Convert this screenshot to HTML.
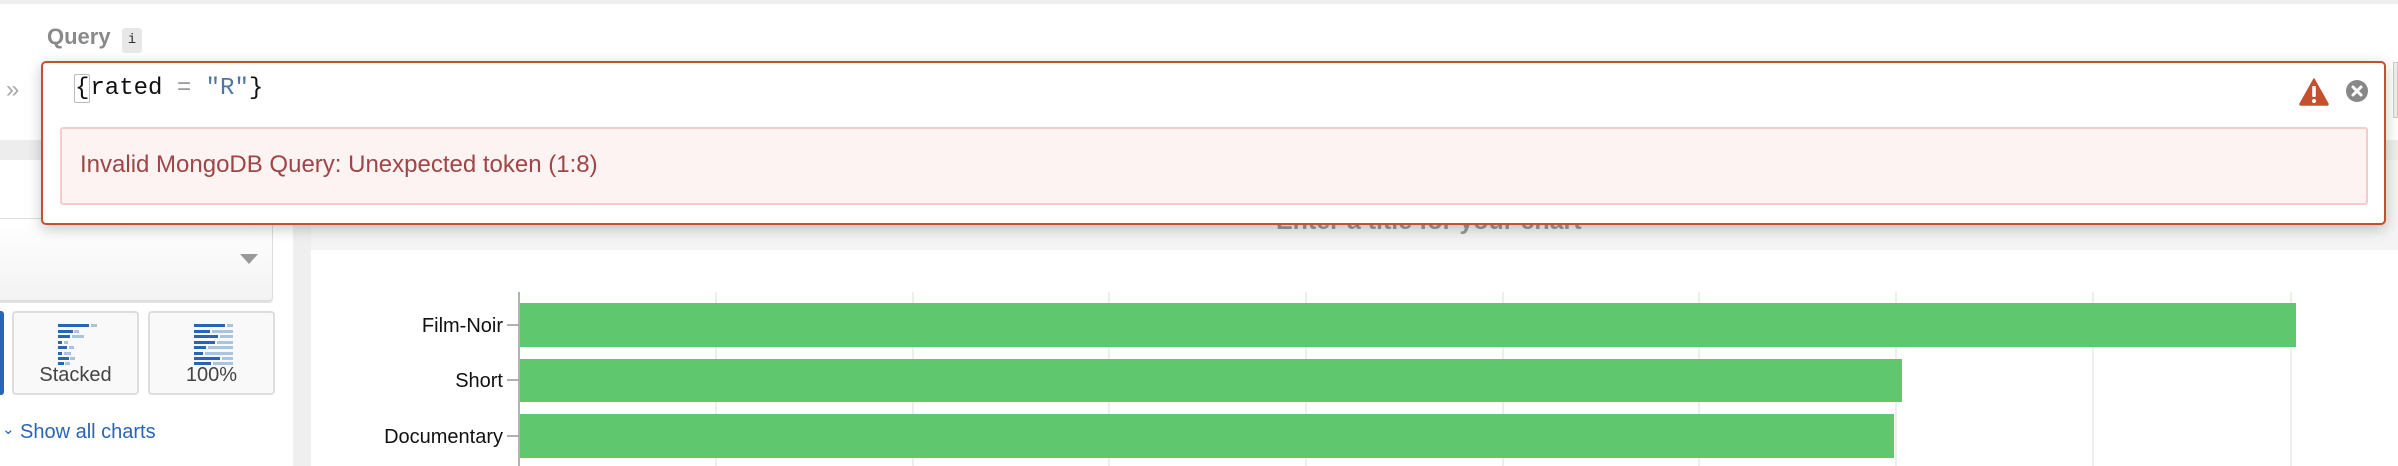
<!DOCTYPE html>
<html><head><meta charset="utf-8"><style>
*{margin:0;padding:0;box-sizing:border-box}
body{width:2398px;height:466px;overflow:hidden;background:#fff;font-family:"Liberation Sans",sans-serif;position:relative}
.abs{position:absolute}
</style></head><body>
<div class="abs" style="left:0;top:0;width:2398px;height:4px;background:#eeeeee"></div>
<div class="abs" style="left:47px;top:24px;font-size:22px;font-weight:bold;color:#8a8a8a">Query</div>
<div class="abs" style="left:122px;top:28px;width:20px;height:25px;background:#e8e8e8;border-radius:3px;font-family:'Liberation Mono',monospace;font-size:14px;color:#333;text-align:center;line-height:25px">i</div>
<div class="abs" style="left:6px;top:76px;font-size:24px;color:#aaa">»</div>
<div class="abs" style="left:2393px;top:62px;width:5px;height:56px;background:#eee;border:1px solid #ccc"></div>
<div class="abs" style="left:0;top:140px;width:2398px;height:20px;background:#ededed"></div>
<div class="abs" style="left:0;top:160px;width:293px;height:306px;background:#fff"></div>
<div class="abs" style="left:293px;top:140px;width:18px;height:326px;background:#efefef"></div>
<div class="abs" style="left:311px;top:160px;width:2087px;height:306px;background:#f4f4f4"></div>
<div class="abs" style="left:311px;top:250px;width:2087px;height:216px;background:#fff"></div>
<div class="abs" style="left:0;top:218px;width:273px;height:83px;background:linear-gradient(#fff,#f3f3f3);border:1px solid #ddd;border-left:none;border-radius:0 4px 4px 0;box-shadow:0 2px 0 #e2e2e2"></div>
<div class="abs" style="left:240px;top:254px;width:0;height:0;border-left:9px solid transparent;border-right:9px solid transparent;border-top:10px solid #999"></div>
<div class="abs" style="left:0;top:311px;width:4px;height:84px;background:#2a64b8;border-radius:0 3px 3px 0"></div>
<div class="abs" style="left:12px;top:311px;width:127px;height:84px;border:2px solid #ddd;border-radius:4px;background:#f9f9f9"></div>
<div class="abs" style="left:148px;top:311px;width:127px;height:84px;border:2px solid #ddd;border-radius:4px;background:#f9f9f9"></div>
<svg class="abs" style="left:58px;top:324px" width="42" height="42">
<g fill="#2a64b8"><rect x="0" y="0" width="31" height="3"/><rect x="0" y="6" width="15" height="3"/><rect x="0" y="11" width="12" height="3"/><rect x="0" y="17" width="4" height="3"/><rect x="0" y="22" width="9" height="3"/><rect x="0" y="28" width="4" height="3"/><rect x="0" y="33" width="11" height="3"/><rect x="0" y="38" width="6" height="3"/></g>
<g fill="#a9c4e0"><rect x="33" y="0" width="6" height="3"/><rect x="16" y="6" width="5" height="3"/><rect x="14" y="11" width="12" height="3"/><rect x="6" y="17" width="4" height="3"/><rect x="11" y="22" width="5" height="3"/><rect x="6" y="28" width="7" height="3"/><rect x="12" y="33" width="5" height="3"/><rect x="7" y="38" width="5" height="3"/></g></svg>
<svg class="abs" style="left:194px;top:324px" width="42" height="42">
<g fill="#2a64b8"><rect x="0" y="0" width="31" height="3"/><rect x="0" y="6" width="16" height="3"/><rect x="0" y="11" width="24" height="3"/><rect x="0" y="17" width="21" height="3"/><rect x="0" y="22" width="12" height="3"/><rect x="0" y="28" width="9" height="3"/><rect x="0" y="33" width="26" height="3"/><rect x="0" y="38" width="17" height="3"/></g>
<g fill="#a9c4e0"><rect x="33" y="0" width="6" height="3"/><rect x="18" y="6" width="21" height="3"/><rect x="26" y="11" width="13" height="3"/><rect x="23" y="17" width="16" height="3"/><rect x="14" y="22" width="25" height="3"/><rect x="11" y="28" width="28" height="3"/><rect x="28" y="33" width="11" height="3"/><rect x="19" y="38" width="20" height="3"/></g></svg>
<div class="abs" style="left:12px;top:364px;width:127px;text-align:center;font-size:20px;color:#444">Stacked</div>
<div class="abs" style="left:148px;top:364px;width:127px;text-align:center;font-size:20px;color:#444">100%</div>
<div class="abs" style="left:2px;top:420px;font-size:15px;color:#2a64b8">&#8964;</div>
<div class="abs" style="left:20px;top:421px;font-size:20px;color:#2a64b8">Show all charts</div>
<div class="abs" style="left:1276px;top:207px;font-size:25px;font-weight:bold;color:#9a9a9a;white-space:nowrap">Enter a title for your chart</div>
<svg class="abs" style="left:0;top:0" width="2398" height="466">
<g stroke="#e4e4e4" stroke-width="1.3">
<line x1="716" y1="292" x2="716" y2="466"/><line x1="913" y1="292" x2="913" y2="466"/><line x1="1109" y1="292" x2="1109" y2="466"/><line x1="1306" y1="292" x2="1306" y2="466"/><line x1="1503" y1="292" x2="1503" y2="466"/><line x1="1699" y1="292" x2="1699" y2="466"/><line x1="1896" y1="292" x2="1896" y2="466"/><line x1="2093" y1="292" x2="2093" y2="466"/><line x1="2291" y1="292" x2="2291" y2="466"/>
</g>
<line x1="519" y1="292" x2="519" y2="466" stroke="#999" stroke-width="1.5"/>
<g stroke="#999" stroke-width="1.5"><line x1="507" y1="325" x2="519" y2="325"/><line x1="507" y1="380" x2="519" y2="380"/><line x1="507" y1="436" x2="519" y2="436"/></g>
<g fill="#5fc86e"><rect x="520" y="303" width="1776" height="44"/><rect x="520" y="359" width="1382" height="43"/><rect x="520" y="414" width="1374" height="44"/></g>
<g font-family="Liberation Sans" font-size="20" fill="#111" text-anchor="end"><text x="503" y="332">Film-Noir</text><text x="503" y="387">Short</text><text x="503" y="443">Documentary</text></g>
</svg>
<div class="abs" style="left:41px;top:61px;width:2345px;height:164px;background:#fff;border:2px solid #c4502d;border-radius:5px;box-shadow:0 4px 14px rgba(0,0,0,0.22)"></div>
<div class="abs" style="left:74px;top:75px;font-family:'Liberation Mono',monospace;font-size:24px;color:#111;white-space:pre"><span style="border:1px solid #bbb;border-radius:2px">{</span>rated <span style="color:#999">=</span> <span style="color:#4a76a8">"R"</span>}</div>
<div class="abs" style="left:60px;top:127px;width:2308px;height:78px;background:#fdf3f3;border:2px solid #f5cccc;border-radius:3px"></div>
<div class="abs" style="left:80px;top:151px;font-size:24px;color:#a04545">Invalid MongoDB Query: Unexpected token (1:8)</div>
<svg class="abs" style="left:2299px;top:78px" width="30" height="28" viewBox="0 0 30 28"><path d="M15 1 L29 26 Q29 27 28 27 L2 27 Q1 27 1 26 Z" fill="#c4502d" stroke="#c4502d" stroke-linejoin="round" stroke-width="1.5"/><rect x="13.2" y="8" width="3.6" height="11" rx="1" fill="#fff"/><circle cx="15" cy="23" r="2" fill="#fff"/></svg>
<svg class="abs" style="left:2346px;top:80px" width="22" height="22" viewBox="0 0 22 22"><circle cx="11" cy="11" r="11" fill="#888"/><path d="M7 7 L15 15 M15 7 L7 15" stroke="#fff" stroke-width="3" stroke-linecap="round"/></svg>
</body></html>
